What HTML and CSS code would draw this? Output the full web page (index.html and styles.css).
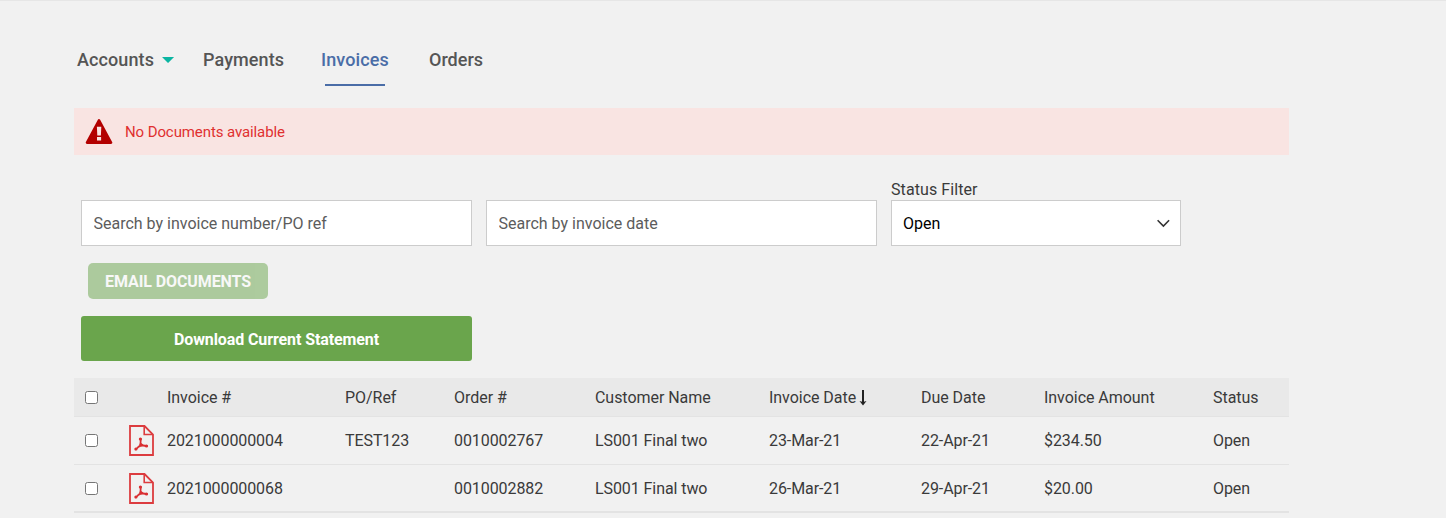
FILE: index.html
```html
<!DOCTYPE html>
<html lang="en">
<head>
<meta charset="utf-8">
<title>Invoices</title>
<link rel="stylesheet" href="styles.css">
</head>
<body>
<svg class="defs" width="0" height="0" aria-hidden="true">
  <symbol id="pdf" viewBox="0 0 25 31">
    <path d="M1 1H15.5L24 9.5V30H1Z" fill="none" stroke="#dc3c3f" stroke-width="1.8"/>
    <path d="M15.2 1V9.5H24" fill="none" stroke="#dc3c3f" stroke-width="1.6"/>
    <path d="M11.6 13.8C11.8 17.5 11.8 19 10.8 20.5C9.6 22.2 8.2 23 6.8 24.3M11.7 18.5C12.9 20.6 14.8 20.8 17.8 21M9.2 22C11.2 20.8 13.6 20.4 16 20.9" fill="none" stroke="#d92f32" stroke-width="1.8" stroke-linecap="round"/>
    <circle cx="11.4" cy="14" r="1.6" fill="#d92f32"/>
    <circle cx="6.9" cy="24" r="1.6" fill="#d92f32"/>
    <circle cx="17.5" cy="21" r="1.6" fill="#d92f32"/>
  </symbol>
</svg>
<main class="page">
  <nav class="tabs">
    <a class="tab tab-accounts">Accounts<span class="caret"></span></a>
    <a class="tab tab-payments">Payments</a>
    <a class="tab tab-active">Invoices</a>
    <a class="tab tab-orders">Orders</a>
  </nav>
  <div class="alert">
    <svg class="alert-icon" width="28" height="26" viewBox="0 0 28 26">
      <path d="M14 1.4L26 23.6H2Z" fill="#b30000" stroke="#b30000" stroke-width="2.6" stroke-linejoin="round"/>
      <path d="M11.9 7.8H16.3L15.9 16.4H12.3ZM12 17.9H16.1V21.6H12Z" fill="#f9e4e2"/>
    </svg>
    <span>No Documents available</span>
  </div>
  <div class="filters">
    <input class="field" type="text" placeholder="Search by invoice number/PO ref">
    <input class="field" type="text" placeholder="Search by invoice date">
    <div class="status">
      <label class="status-label">Status Filter</label>
      <div class="select">
        <span>Open</span>
        <svg width="14" height="9" viewBox="0 0 14 9"><path d="M1.6 1.3L7.4 7L13.1 1.3" fill="none" stroke="#333" stroke-width="1.6"/></svg>
      </div>
    </div>
  </div>
  <button class="btn btn-email" disabled>EMAIL DOCUMENTS</button>
  <button class="btn btn-download">Download Current Statement</button>
  <section class="table">
    <div class="row head">
      <input type="checkbox" class="check"><span></span><span>Invoice #</span><span>PO/Ref</span><span>Order #</span><span>Customer Name</span>
      <span class="sorted">Invoice Date<svg class="sort" width="8" height="16" viewBox="0 0 8 16"><path d="M4 0V13" stroke="#222" stroke-width="2"/><path d="M.5 11L4 15.5L7.5 11L4 12Z" fill="#222"/></svg></span>
      <span>Due Date</span><span>Invoice Amount</span><span>Status</span>
    </div>
    <div class="row">
      <input type="checkbox" class="check"><svg class="pdf" width="25" height="31"><use href="#pdf"/></svg><span>2021000000004</span><span>TEST123</span><span>0010002767</span><span>LS001 Final two</span><span>23-Mar-21</span><span>22-Apr-21</span><span>$234.50</span><span>Open</span>
    </div>
    <div class="row last">
      <input type="checkbox" class="check"><svg class="pdf" width="25" height="31"><use href="#pdf"/></svg><span>2021000000068</span><span></span><span>0010002882</span><span>LS001 Final two</span><span>26-Mar-21</span><span>29-Apr-21</span><span>$20.00</span><span>Open</span>
    </div>
  </section>
</main>
</body>
</html>
```
FILE: styles.css
```css
* { box-sizing: border-box; }
body {
  margin: 0;
  height: 518px;
  overflow: hidden;
  background: #f1f1f1;
  border-top: 1px solid #e6e6e6;
  font: 400 16px/20px Roboto, sans-serif;
  color: #3a3a3a;
}
.defs { position: absolute; }
.page { width: 1215px; margin-left: 74px; padding-top: 47px; }
.tabs { display: flex; height: 60px; padding-left: 3px; }
.tab {
  display: flex;
  height: 38px;
  font-size: 18px;
  font-weight: 500;
  line-height: 24px;
  letter-spacing: .1px;
  color: #555;
}
.tab-accounts { width: 98px; margin-right: 28px; }
.tab-payments { width: 82px; margin-right: 36px; }
.tab-active {
  width: 68px;
  margin-right: 40px;
  color: #4a6da7;
  background: linear-gradient(#4a6da7, #4a6da7) 4px 36px / 60px 2px no-repeat;
}
.tab-orders { letter-spacing: 0; }
.caret {
  margin: 9px 0 0 8px;
  width: 12px;
  height: 6px;
  background: #0bb5a2;
  clip-path: polygon(0 0, 100% 0, 50% 100%);
}
.alert {
  display: flex;
  align-items: center;
  height: 47px;
  padding-left: 11px;
  gap: 12px;
  background: #f9e4e2;
  color: #e03030;
  font-size: 15px;
  letter-spacing: -.1px;
}
.filters { display: flex; align-items: flex-end; gap: 14px; height: 91px; padding-left: 7px; }
.field {
  width: 391px;
  height: 46px;
  padding: 0 11.5px;
  border: 1px solid #ccc;
  background: #fff;
  font: inherit;
}
.field::placeholder { color: #5c5c5c; opacity: 1; }
.status { width: 290px; }
.status-label { display: block; height: 21px; line-height: 22px; letter-spacing: .08px; }
.select {
  display: flex;
  align-items: center;
  justify-content: space-between;
  height: 46px;
  padding: 1px 10px 0 11px;
  border: 1px solid #ccc;
  background: #fff;
  color: #000;
}
.btn {
  display: block;
  padding: 2px 0 0;
  border: 0;
  background: #6aa54c;
  font: 700 16px/20px Roboto, sans-serif;
  letter-spacing: -.1px;
  color: #fff;
}
.btn-email {
  width: 180px;
  height: 36px;
  margin: 17px 0 0 14px;
  border-radius: 5px;
  opacity: .5;
}
.btn-download { width: 391px; height: 45px; margin: 17px 0 17px 7px; border-radius: 3px; }
.row {
  display: grid;
  grid-template-columns: 44px 38px 178px 109px 141px 174px 152px 123px 169px 76px;
  align-items: center;
  height: 48px;
  padding-left: 11px;
  border-bottom: 1px solid #e3e3e3;
  white-space: nowrap;
  letter-spacing: -.08px;
}
.head { height: 39px; padding-top: 1px; background: #e9e9e9; letter-spacing: -.04px; }
.last { padding-top: 1px; border-bottom-width: 2px; }
.check { width: 13px; height: 13px; margin: 0; }
.pdf { display: block; }
.sorted { display: flex; align-items: center; gap: 3px; }
```
